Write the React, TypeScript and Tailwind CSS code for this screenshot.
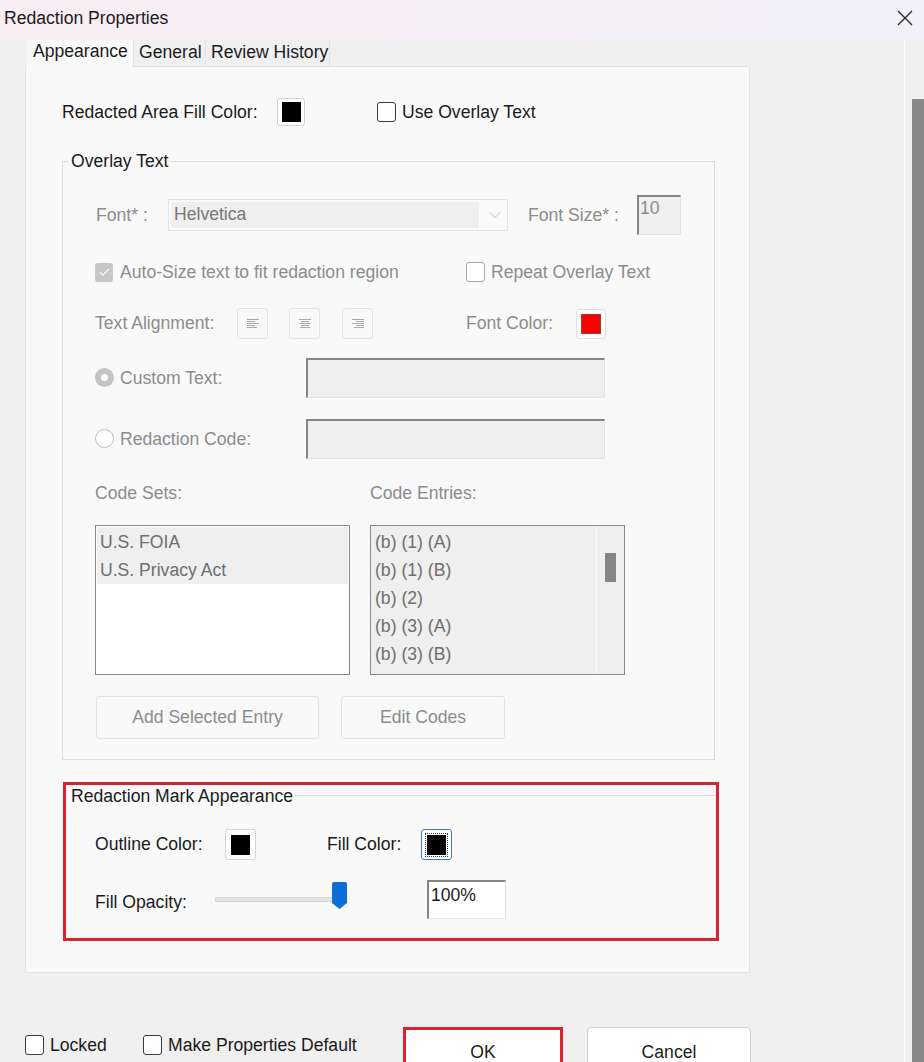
import { Check } from 'lucide-react';

const dim = 'text-[#8c8c8c]';

function Swatch({ color = 'bg-black', focus = false, size = 'w-[28px] h-[28px]' }: { color?: string; focus?: boolean; size?: string }) {
  return (
    <div
      className={`${size} flex items-center justify-center rounded-[3px] bg-white ${
        focus ? 'border border-[#3d7fb8]' : 'border border-[#d2d2d2]'
      }`}
    >
      <div className={`${focus ? 'outline-1 outline-dotted outline-[#333] outline-offset-1' : ''} w-[19px] h-[20px] ${color}`} />
    </div>
  );
}

function Box({ checked = false, disabled = false }: { checked?: boolean; disabled?: boolean }) {
  if (checked) {
    return (
      <div className="w-[18px] h-[19px] rounded-[3px] bg-[#c6c6c6] flex items-center justify-center">
        <Check size={13} strokeWidth={2} className="text-white" />
      </div>
    );
  }
  return (
    <div
      className={`w-[19px] h-[20px] rounded-[3px] bg-white border ${disabled ? 'border-[#a6a6a6]' : 'border-[#3a3a3a]'}`}
    />
  );
}

function AlignBtn({ kind }: { kind: 'left' | 'center' | 'right' }) {
  const rows = kind === 'left'
    ? [[0, 12], [0, 8], [0, 12], [0, 8], [0, 10]]
    : kind === 'center'
      ? [[0, 12], [2, 8], [0, 12], [2, 8], [1, 10]]
      : [[0, 12], [4, 8], [0, 12], [4, 8], [2, 10]];
  return (
    <div className="w-[31px] h-[31px] rounded-[3px] border border-[#e4e4e4] bg-[#f9f9f9] flex items-center justify-center">
      <svg width="12" height="10" viewBox="0 0 12 10">
        {rows.map(([x, w], i) => (
          <rect key={i} x={x} y={i * 2} width={w} height="1" fill="#a9a9a9" />
        ))}
      </svg>
    </div>
  );
}

function SunkenInput({ w, h, bg, children }: { w: string; h: string; bg: string; children?: React.ReactNode }) {
  return (
    <div
      className={`${w} ${h} ${bg} border-t-2 border-l-2 border-t-[#858585] border-l-[#858585] border-b border-r border-b-[#e2e2e2] border-r-[#e2e2e2] pl-[1px] leading-[22px]`}
    >
      {children}
    </div>
  );
}

export default function App() {
  return (
    <div className="w-[924px] h-[1062px] overflow-hidden bg-[#f0f0f0] font-['Liberation_Sans',Arial,sans-serif] text-[17.6px] text-[#1b1b1b]">
      {/* title bar */}
      <div className="h-[40px] flex items-center justify-between pl-[4px] pr-[11px] bg-gradient-to-r from-[#f8eef3] to-[#f1f1f7]">
        <span className="-mt-[3px]">Redaction Properties</span>
        <svg width="16" height="16" viewBox="0 0 16 16" className="-mt-[4px]">
          <path d="M1 1 L15 15 M15 1 L1 15" stroke="#222" strokeWidth="1.3" />
        </svg>
      </div>

      <div className="flex h-[1022px]">
        <div className="w-[904px] pl-[25px]">
          {/* tabs */}
          <div className="flex h-[26px] ml-[2px]">
            <div className="w-[106px] bg-[#f9f9f9] pl-[6px] leading-[23px] relative z-10 h-[27px]">Appearance</div>
            <div className="w-[72px] border-l border-[#e2e2e2] pl-[5px] leading-[25px]">General</div>
            <div className="w-[125px] border-l border-r border-[#e2e2e2] pl-[5px] leading-[25px]">Review History</div>
          </div>

          {/* panel */}
          <div className="w-[725px] h-[907px] border border-[#e3e3e3] bg-[#f9f9f9]">
            <div className="flex items-center h-[28px] mt-[31px] ml-[36px]">
              <span className="w-[215px]">Redacted Area Fill Color:</span>
              <Swatch />
              <div className="ml-[72px]"><Box /></div>
              <span className="ml-[6px]">Use Overlay Text</span>
            </div>

            {/* overlay text group */}
            <div className="relative mt-[35px] ml-[36px] w-[653px] h-[599px] border border-[#dcdcdc]">
              <span className="absolute -top-[11px] left-[5px] px-[3px] bg-[#f9f9f9] leading-[20px]">Overlay Text</span>

              <div className="flex items-center h-[40px] mt-[33px] ml-[33px]">
                <span className={`w-[72px] ${dim}`}>Font* :</span>
                <div className="w-[340px] h-[32px] border border-[#e4e4e4] bg-[#fafafa] flex items-center p-[2px]">
                  <div className="w-[308px] h-[26px] bg-[#efefef] pl-[3px] text-[#777] leading-[24px]">Helvetica</div>
                  <svg width="12" height="8" viewBox="0 0 12 8" className="ml-[10px]">
                    <path d="M1 1.5 L6 6.5 L11 1.5" fill="none" stroke="#bdbdbd" strokeWidth="1" />
                  </svg>
                </div>
                <span className={`ml-[20px] w-[109px] ${dim}`}>Font Size* :</span>
                <SunkenInput w="w-[44px]" h="h-[40px]" bg="bg-[#efefef]">
                  <span className="text-[#8c8c8c]">10</span>
                </SunkenInput>
              </div>

              <div className="flex items-center h-[20px] mt-[27px] ml-[32px]">
                <div className="w-[371px] flex items-center">
                  <Box checked />
                  <span className={`ml-[7px] ${dim}`}>Auto-Size text to fit redaction region</span>
                </div>
                <Box disabled />
                <span className={`ml-[6px] ${dim}`}>Repeat Overlay Text</span>
              </div>

              <div className="flex items-center h-[31px] mt-[26px] ml-[32px]">
                <span className={`w-[142px] ${dim}`}>Text Alignment:</span>
                <AlignBtn kind="left" />
                <div className="ml-[21px]"><AlignBtn kind="center" /></div>
                <div className="ml-[22px]"><AlignBtn kind="right" /></div>
                <span className={`ml-[93px] w-[110px] ${dim}`}>Font Color:</span>
                <div className="w-[30px] h-[30px] rounded-[3px] border border-[#e0e0e0] bg-white flex items-center justify-center">
                  <div className="w-[20px] h-[20px] bg-[#ff0000] border border-[#a33]" />
                </div>
              </div>

              <div className="flex items-center h-[40px] mt-[19px] ml-[32px]">
                <div className="w-[211px] flex items-center">
                  <div className="w-[19px] h-[19px] rounded-full bg-[#c4c4c4] flex items-center justify-center">
                    <div className="w-[7px] h-[7px] rounded-full bg-white" />
                  </div>
                  <span className={`ml-[6px] ${dim}`}>Custom Text:</span>
                </div>
                <SunkenInput w="w-[299px]" h="h-[40px]" bg="bg-[#efefef]" />
              </div>

              <div className="flex items-center h-[40px] mt-[21px] ml-[32px]">
                <div className="w-[211px] flex items-center">
                  <div className="w-[19px] h-[19px] rounded-full bg-white border border-[#bdbdbd]" />
                  <span className={`ml-[6px] ${dim}`}>Redaction Code:</span>
                </div>
                <SunkenInput w="w-[299px]" h="h-[40px]" bg="bg-[#efefef]" />
              </div>

              <div className={`flex items-center h-[20px] mt-[24px] ml-[32px] ${dim}`}>
                <span className="w-[275px]">Code Sets:</span>
                <span>Code Entries:</span>
              </div>

              <div className="flex h-[150px] mt-[22px] ml-[32px]">
                <div className="w-[255px] h-[150px] border border-[#8a8a8a] bg-white p-[1px] text-[#6e6e6e] leading-[28px]">
                  <div className="bg-[#efefef] pl-[3px] pt-[1px]">
                    <div>U.S. FOIA</div>
                    <div>U.S. Privacy Act</div>
                  </div>
                </div>
                <div className="ml-[20px] w-[255px] h-[150px] border border-[#8a8a8a] bg-[#efefef] flex text-[#6e6e6e] leading-[28px]">
                  <div className="w-[226px] pl-[4px] pt-[2px] border-r border-[#fafafa]">
                    <div>(b) (1) (A)</div>
                    <div>(b) (1) (B)</div>
                    <div>(b) (2)</div>
                    <div>(b) (3) (A)</div>
                    <div>(b) (3) (B)</div>
                  </div>
                  <div className="flex-1 pt-[27px] pl-[8px]">
                    <div className="w-[11px] h-[29px] bg-[#858585]" />
                  </div>
                </div>
              </div>

              <div className="flex h-[43px] mt-[21px] ml-[33px]">
                <div className={`w-[223px] h-[43px] rounded-[3px] border border-[#e3e3e3] bg-[#f9f9f9] flex items-center justify-center ${dim}`}>
                  Add Selected Entry
                </div>
                <div className={`ml-[22px] w-[164px] h-[43px] rounded-[3px] border border-[#e3e3e3] bg-[#f9f9f9] flex items-center justify-center ${dim}`}>
                  Edit Codes
                </div>
              </div>
            </div>

            {/* redaction mark appearance (highlighted) */}
            <div className="mt-[22px] ml-[37px] w-[656px] h-[159px] border-[3px] border-[#d9232e]">
              <div className="flex items-center h-[20px] mt-[1px] pl-[5px] pr-[1px]">
                <span>Redaction Mark Appearance</span>
                <div className="flex-1 h-px bg-[#dcdcdc] ml-[1px] -mt-[2px]" />
              </div>

              <div className="flex items-center h-[31px] mt-[23px] pl-[29px]">
                <span className="w-[130px]">Outline Color:</span>
                <Swatch size="w-[31px] h-[31px]" />
                <span className="ml-[71px] w-[94px]">Fill Color:</span>
                <Swatch size="w-[31px] h-[31px]" focus />
              </div>

              <div className="flex items-center h-[39px] mt-[20px] pl-[29px]">
                <span className="w-[120px] mt-[5px]">Fill Opacity:</span>
                <div className="relative w-[132px] h-[30px] flex items-center">
                  <div className="w-[125px] h-[5px] bg-[#e4e4e4] border border-[#d3d3d3] rounded-[1px]" />
                  <svg width="15" height="27" viewBox="0 0 15 27" className="absolute left-[117px] top-[-3px]">
                    <path d="M2 0 H13 A2 2 0 0 1 15 2 V21 L7.5 27 L0 21 V2 A2 2 0 0 1 2 0 Z" fill="#0a6fd6" />
                  </svg>
                </div>
                <div className="ml-[80px]">
                  <SunkenInput w="w-[79px]" h="h-[39px]" bg="bg-white">
                    <span className="pl-[1px] leading-[26px]">100%</span>
                  </SunkenInput>
                </div>
              </div>
            </div>
          </div>

          {/* bottom row */}
          <div className="flex items-start mt-[54px]">
            <div className="w-[118px] flex items-center mt-[5px]">
              <Box />
              <span className="ml-[6px]">Locked</span>
            </div>
            <div className="w-[260px] flex items-center mt-[5px]">
              <Box />
              <span className="ml-[6px]">Make Properties Default</span>
            </div>
            <div className="w-[160px] h-[40px] border-[3px] border-[#d9232e] bg-white flex justify-center pt-[9px]">OK</div>
            <div className="ml-[24px] w-[164px] h-[40px] rounded-[4px] border border-[#d0d0d0] bg-white flex justify-center pt-[11px]">
              Cancel
            </div>
          </div>
        </div>

        {/* window scrollbar */}
        <div className="w-px bg-[#fafafa]" />
        <div className="flex-1 pt-[59px] pl-[7px]">
          <div className="w-[12px] h-full bg-[#878787]" />
        </div>
      </div>
    </div>
  );
}
